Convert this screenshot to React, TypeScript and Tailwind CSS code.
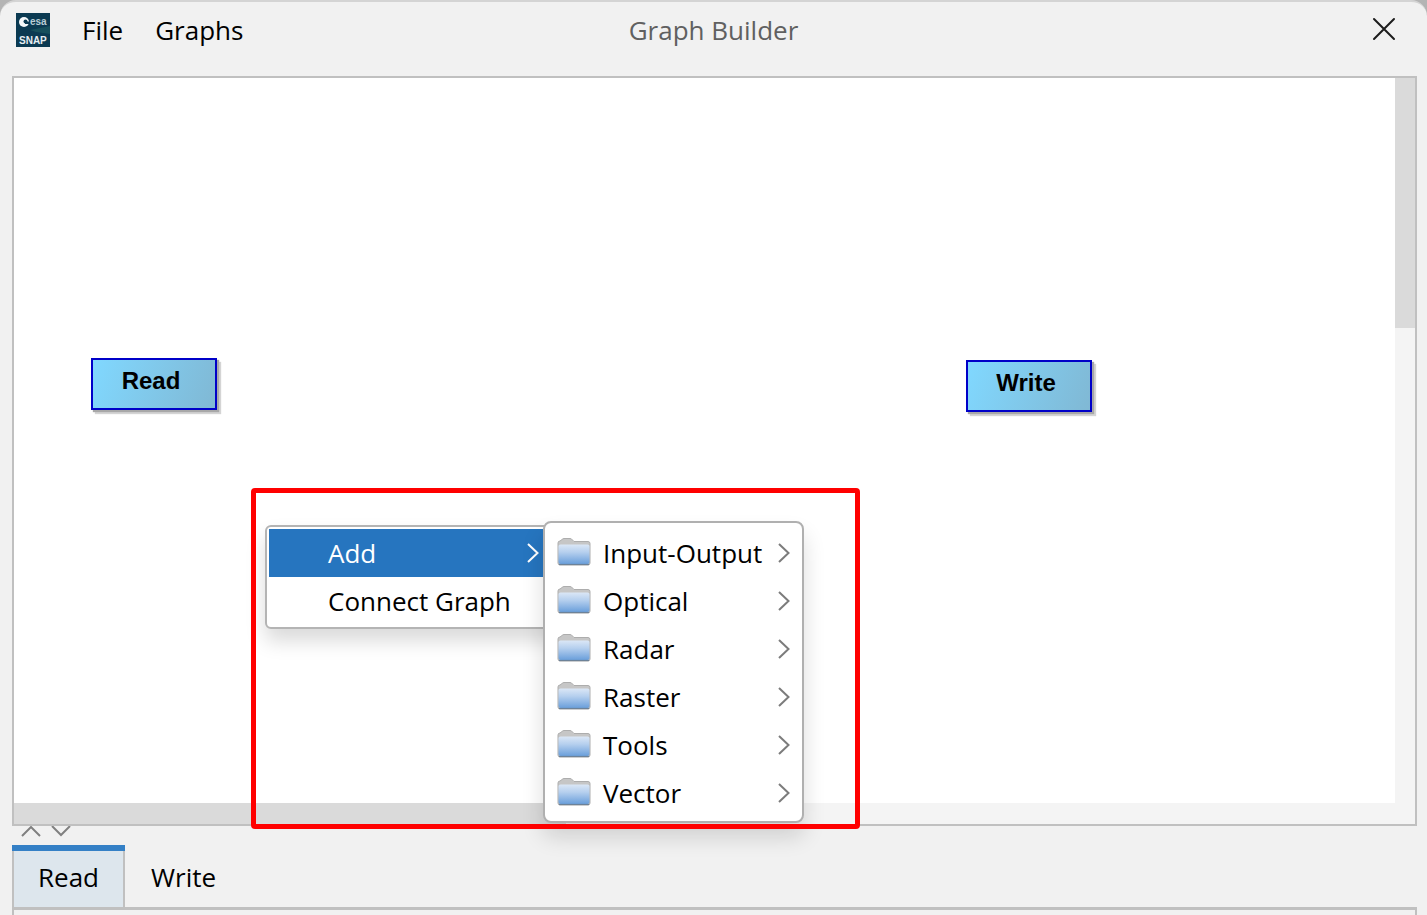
import { useState } from "react";

const categories = ["Input-Output", "Optical", "Radar", "Raster", "Tools", "Vector"];
const tabs = ["Read", "Write"];

function SnapLogo() {
  return (
    <svg width="34" height="34" viewBox="0 0 34 34" aria-label="ESA SNAP" role="img">
      <rect width="34" height="34" fill="#0b3a52" />
      <path d="M14 17 L34 13 V21 L20 19Z" fill="#174f5c" />
      <circle cx="8" cy="9" r="5" fill="#f4f8fa" />
      <circle cx="9.500" cy="8.500" r="2" fill="#0b3a52" />
      <path d="M9 8.500h5v2.500H9z" fill="#0b3a52" />
      <text x="14" y="12" fontFamily="Liberation Sans, sans-serif" fontSize="10" fontWeight="700" fill="#b9ccd5">
        esa
      </text>
      <text x="3" y="31" fontFamily="Liberation Sans, sans-serif" fontSize="10" fontWeight="700" fill="#e6eef2">
        SNAP
      </text>
    </svg>
  );
}

function FolderIcon() {
  return (
    <svg width="34" height="28" viewBox="0 0 34 28" className="shrink-0" aria-hidden="true">
      <defs>
        <linearGradient id="folder" x1="0" y1="0" x2="0" y2="1">
          <stop offset="0" stopColor="#dbe7f6" />
          <stop offset="0.4" stopColor="#b5cfee" />
          <stop offset="1" stopColor="#6a9fdb" />
        </linearGradient>
      </defs>
      <path d="M1 5 Q1 3 3 3 L5 1.500 Q6 .5 7 .5 H13 Q14.500 .5 15.500 2 L17 3.500 H31 Q33 3.500 33 5.500 V25 Q33 27 31 27 H3 Q1 27 1 25Z" fill="#c6c6c6" stroke="#adadad" strokeWidth="1" />
      <path d="M1.500 8 Q1.500 6.500 3.500 6.500 H30.500 Q32.500 6.500 32.500 8 V24 Q32.500 26 30.500 26 H3.500 Q1.500 26 1.500 24Z" fill="url(#folder)" />
      <path d="M2 26.500 H32" stroke="#6d8298" strokeWidth="1.200" />
    </svg>
  );
}

function Chevron({ className }: { className?: string }) {
  return (
    <svg width="12" height="20" viewBox="0 0 12 20" fill="none" stroke="currentColor" strokeWidth="2" className={className} aria-hidden="true">
      <path d="M1 1 L10.500 10 L1 19" />
    </svg>
  );
}

function GraphNode({ label, className }: { label: string; className: string }) {
  return (
    <button
      className={`absolute h-[52px] w-[126px] border-2 border-[#0000c8] bg-linear-110 from-[#80d8ff] to-[#80b8d4] pr-1.5 pb-1.5 font-[Liberation_Sans,sans-serif] text-2xl leading-6 font-bold shadow-[2px_2px_1px_#a8a8a8,4px_4px_1px_#d4d4d4] ${className}`}
    >
      {label}
    </button>
  );
}

function ContextMenu() {
  return (
    <div role="menu" className="absolute top-[447px] left-[251px] w-[302px] rounded-md border-2 border-[#b4b4b4] bg-white p-0.5 shadow-[0_12px_20px_rgba(0,0,0,0.15)]">
      <button role="menuitem" className="flex h-12 w-full items-center justify-between bg-[#2675bf] pr-6 pl-[59px] text-white">
        Add
        <Chevron />
      </button>
      <button role="menuitem" className="flex h-12 w-full items-center pl-[59px] whitespace-nowrap">
        Connect Graph
      </button>
    </div>
  );
}

function CategoryMenu() {
  return (
    <div role="menu" className="absolute top-[443px] left-[529px] w-[261px] rounded-lg border-2 border-[#b0b0b0] bg-white pt-1.5 pb-1 shadow-[0_14px_22px_rgba(0,0,0,0.14)]">
      {categories.map((name) => (
        <button key={name} role="menuitem" className="flex h-12 w-full items-center px-3 whitespace-nowrap">
          <span className="pb-0.5">
            <FolderIcon />
          </span>
          <span className="ml-3">{name}</span>
          <Chevron className="ml-auto text-[#7c7c7c]" />
        </button>
      ))}
    </div>
  );
}

export default function App() {
  const [active, setActive] = useState("Read");

  return (
    <div className="min-h-screen bg-[#b4b4b4] font-[Open_Sans,sans-serif] text-[26px] leading-8 text-black">
      <div className="flex min-h-screen flex-col rounded-t-2xl border-t-2 border-[#d4d4d4] bg-[#f1f1f1]">
        <header className="grid h-[74px] grid-cols-[1fr_auto_1fr] items-start px-4 pt-[11px]">
          <nav className="flex items-start">
            <SnapLogo />
            <button className="ml-8 leading-[34px]">File</button>
            <button className="ml-8 leading-[34px]">Graphs</button>
          </nav>
          <h1 className="leading-[34px] text-[#606060]">Graph Builder</h1>
          <button aria-label="Close" className="mt-1 mr-[15px] justify-self-end">
            <svg width="24" height="24" viewBox="0 0 24 24" stroke="#1c1c1c" strokeWidth="2" strokeLinecap="round">
              <path d="M2 2 L22 22 M22 2 L2 22" />
            </svg>
          </button>
        </header>

        <main className="relative mr-2.5 ml-3 grid min-h-[750px] flex-1 grid-cols-[1fr_20px] grid-rows-[1fr_21px] border-2 border-[#c0c0c0] bg-[#f4f4f4]">
          <div className="bg-white" />
          <div>
            <div className="h-[250px] bg-[#dadada]" />
          </div>
          <div>
            <div className="h-full w-2/5 bg-[#dadada]" />
          </div>
          <GraphNode label="Read" className="top-[280px] left-[77px]" />
          <GraphNode label="Write" className="top-[282px] left-[952px]" />
          <ContextMenu />
          <CategoryMenu />
          <div className="pointer-events-none absolute top-[410px] left-[237px] h-[341px] w-[609px] rounded-sm border-[5px] border-[#ff0000]" />
        </main>

        <footer>
          <div className="flex h-[19px] gap-2.5 pl-[21px] text-[#808080]">
            <button aria-label="Collapse up" className="h-3">
              <svg width="20" height="12" viewBox="0 0 20 12" fill="none" stroke="currentColor" strokeWidth="2">
                <path d="M1 10 L10 1 L19 10" />
              </svg>
            </button>
            <button aria-label="Collapse down" className="h-3">
              <svg width="20" height="12" viewBox="0 0 20 12" fill="none" stroke="currentColor" strokeWidth="2">
                <path d="M1 0 L10 9 L19 0" />
              </svg>
            </button>
          </div>
          <div role="tablist" className="mr-2.5 ml-3 flex h-[62px]">
            {tabs.map((tab) => (
              <button key={tab} role="tab" aria-selected={tab === active} onClick={() => setActive(tab)} className="flex flex-col">
                <span className={tab === active ? "h-1.5 w-full bg-[#3480c6]" : "h-1.5"} />
                <span
                  className={
                    tab === active
                      ? "flex-1 border-x-2 border-[#c0c0c0] bg-[#dde6ed] px-6 pt-2.5"
                      : "flex-1 border-x-2 border-transparent px-6 pt-2.5"
                  }
                >
                  {tab}
                </span>
              </button>
            ))}
          </div>
          <div role="tabpanel" className="mr-2.5 ml-3 h-2 border-2 border-t-3 border-b-0 border-[#c0c0c0]" />
        </footer>
      </div>
    </div>
  );
}
